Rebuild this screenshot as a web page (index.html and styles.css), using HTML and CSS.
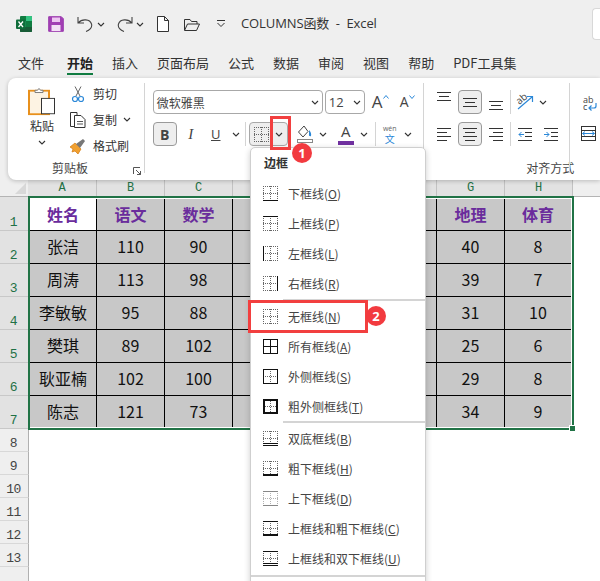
FILE: index.html
```html
<!DOCTYPE html>
<html lang="zh-CN">
<head>
<meta charset="utf-8">
<title>COLUMNS函数 - Excel</title>
<link rel="stylesheet" href="styles.css">
</head>
<body>
<svg class="defs" width="0" height="0">
  <symbol id="chev" viewBox="0 0 8 5"><path d="M1 1 4 4 7 1" fill="none" stroke="#333" stroke-width="1.100"/></symbol>
  <symbol id="dots" viewBox="0 0 15 15"><path d="M.5 0V15M7.500 0V15M14.500 0V15M0 .5H15M0 7.500H15M0 14.500H15" fill="none" stroke="#666" stroke-width="1" stroke-dasharray="1 1" shape-rendering="crispEdges"/></symbol>
  <symbol id="a-top" viewBox="0 0 14 11"><path d="M0 .5H14M2 4.500H12M0 8.500H14" stroke="#333" fill="none"/></symbol>
  <symbol id="a-mid" viewBox="0 0 14 11"><path d="M0 1.500H14M2 5.500H12M0 9.500H14" stroke="#333" fill="none"/></symbol>
  <symbol id="a-left" viewBox="0 0 14 13"><path d="M0 .5H14M0 4.500H10M0 8.500H14M0 12.500H10" stroke="#333" fill="none"/></symbol>
  <symbol id="a-center" viewBox="0 0 14 13"><path d="M0 .5H14M2 4.500H12M0 8.500H14M2 12.500H12" stroke="#333" fill="none"/></symbol>
  <symbol id="a-right" viewBox="0 0 14 13"><path d="M0 .5H14M4 4.500H14M0 8.500H14M4 12.500H14" stroke="#333" fill="none"/></symbol>
</svg>

<header class="titlebar">
  <svg class="q q-logo" width="16" height="16" viewBox="0 0 16 16"><rect x="4" y="0" width="12" height="16" rx="1" fill="#107c41"/><path d="M10 0h5a1 1 0 0 1 1 1v4h-6z" fill="#33c481"/><path d="M10 5h6v6h-6z" fill="#107c41"/><path d="M4 11h12v4a1 1 0 0 1-1 1H5a1 1 0 0 1-1-1z" fill="#185c37"/><path d="M4 5h6v6H4z" fill="#21a366"/><rect x="0" y="3.500" width="9.500" height="9.500" rx="1" fill="#0f6d3a"/><path d="M2.500 5.500 7 11M7 5.500 2.500 11" stroke="#fff" stroke-width="1.300"/></svg>
  <svg class="q q-save" width="16" height="16" viewBox="0 0 16 16"><path d="M.7.700h12.600l2 2V15.300H.7z" fill="#a23fb4" stroke="#9a3aae"/><rect x="4" y="1.500" width="8" height="4.500" fill="#edc6f1"/><rect x="3.500" y="9" width="9" height="6" fill="#f4e0f6"/></svg>
  <svg class="q q-undo" width="16" height="16" viewBox="0 0 16 16"><path d="M1 1V7H7M1.300 6.800C5 2.500 13 3 14.500 8c1 3.500-2 6.500-5.500 7.500" fill="none" stroke="#444" stroke-width="1.100"/></svg>
  <svg class="q q-c1" width="8" height="5"><use href="#chev"/></svg>
  <svg class="q q-redo" width="16" height="16" viewBox="0 0 16 16"><path d="M15 1V7H9M14.700 6.800C11 2.500 3 3 1.500 8c-1 3.500 2 6.500 5.500 7.500" fill="none" stroke="#444" stroke-width="1.100"/></svg>
  <svg class="q q-c2" width="8" height="5"><use href="#chev"/></svg>
  <svg class="q q-new" width="12" height="16" viewBox="0 0 12 16"><path d="M.5.500H7.500L11.500 4.500V15.500H.5ZM7.500.500V4.500H11.500" fill="#fff" stroke="#333"/></svg>
  <svg class="q q-open" width="16" height="13" viewBox="0 0 16 13"><path d="M.5 12V1.500H6l1.500 2H13V6M.5 12.500H12.500L15.500 6H3.500Z" fill="none" stroke="#333"/></svg>
  <svg class="q q-more" width="8" height="8" viewBox="0 0 8 8"><path d="M0 .5H8M.5 3 4 6.500 7.500 3" fill="none" stroke="#333"/></svg>
  <div class="doc-title">COLUMNS函数&nbsp; -&nbsp; Excel</div>
  <div class="search"></div>
</header>

<nav class="tabs">
  <span class="tab">文件</span>
  <span class="tab tab-on">开始</span>
  <span class="tab">插入</span>
  <span class="tab">页面布局</span>
  <span class="tab">公式</span>
  <span class="tab">数据</span>
  <span class="tab">审阅</span>
  <span class="tab">视图</span>
  <span class="tab">帮助</span>
  <span class="tab">PDF工具集</span>
</nav>

<section class="ribbon">
  <div class="group g-clip">
    <div class="clip-body">
      <div class="paste">
        <svg width="28" height="28" viewBox="0 0 28 31" preserveAspectRatio="none"><rect x="1" y="3" width="20" height="26" fill="#fdf3e3" stroke="#e8901c" stroke-width="2"/><path d="M7 5V2.500h2.500L11 .5l1.500 2H15V5Z" fill="#fff" stroke="#777"/><rect x="13.500" y="11.500" width="13" height="17" fill="#fff" stroke="#333"/></svg>
        <span class="paste-label">粘贴</span>
        <svg class="paste-chev" width="8" height="5"><use href="#chev"/></svg>
      </div>
      <div class="clip-list">
        <div class="clip-row">
          <svg width="12" height="17" viewBox="0 0 12 17"><path d="M3 .5 8 10M9 .5 4 10" stroke="#666" fill="none"/><circle cx="3" cy="13" r="2.500" fill="none" stroke="#2b88d8" stroke-width="1.200"/><circle cx="9" cy="13" r="2.500" fill="none" stroke="#2b88d8" stroke-width="1.200"/></svg>
          <span>剪切</span>
        </div>
        <div class="clip-row">
          <svg width="16" height="16" viewBox="0 0 16 16"><path d="M4.500 14.500H.5V.5H7V3" fill="none" stroke="#333"/><path d="M4.500 3.500H11L15 7.500V15.500H4.500Z" fill="#fff" stroke="#333"/><path d="M7 9.500H13M7 12H13" stroke="#555"/></svg>
          <span>复制</span>
          <svg class="clip-chev" width="8" height="5"><use href="#chev"/></svg>
        </div>
        <div class="clip-row">
          <svg width="16" height="15" viewBox="0 0 16 15"><path d="M0 8 5 4l6 6-3 5-3-3-3 1 1-3Z" fill="#f0a030" stroke="#d47a10" stroke-width=".7"/><path d="M6 5 13 0l2 2-5 7Z" fill="#777"/></svg>
          <span>格式刷</span>
        </div>
      </div>
    </div>
    <div class="group-label lab-clip">剪贴板
      <svg class="launch" width="8" height="8" viewBox="0 0 8 8"><path d="M.5 7V.5H7M3 3 7.500 7.500M7.500 4V7.500H4" fill="none" stroke="#555"/></svg>
    </div>
  </div>

  <div class="group g-font">
    <div class="tool-row">
      <div class="field f-name">微软雅黑<svg width="8" height="5"><use href="#chev"/></svg></div>
      <div class="field f-size">12<svg width="8" height="5"><use href="#chev"/></svg></div>
      <span class="grow">A<svg width="6" height="4" viewBox="0 0 6 4"><path d="M.5 3.500 3 .5l2.500 3" fill="none" stroke="#2b88d8"/></svg></span>
      <span class="shrink">A<svg width="6" height="4" viewBox="0 0 6 4"><path d="M.5.500 3 3.500 5.500.5" fill="none" stroke="#2b88d8"/></svg></span>
    </div>
    <div class="tool-row">
      <span class="btn on bold">B</span>
      <span class="btn ital">I</span>
      <span class="btn under">U</span>
      <span class="cv c-u"><svg width="8" height="5"><use href="#chev"/></svg></span>
      <span class="vline v-a"></span>
      <span class="split">
        <svg width="15" height="15"><use href="#dots"/></svg>
        <svg class="split-c" width="8" height="5"><use href="#chev"/></svg>
      </span>
      <svg class="fill-ic" width="16" height="18" viewBox="0 0 16 18"><path d="M7 1 1.500 7 6 12l5-5.500Z" fill="#fff" stroke="#444"/><path d="M12 5c2 2 2.500 4 2 6-1 .5-2.500 0-2-2Z" fill="#2b88d8"/><rect x=".5" y="14.500" width="15" height="3" fill="#fff" stroke="#888"/></svg>
      <span class="cv c-f"><svg width="8" height="5"><use href="#chev"/></svg></span>
      <span class="color-a">A<i></i></span>
      <span class="cv c-f"><svg width="8" height="5"><use href="#chev"/></svg></span>
      <span class="vline v-b"></span>
      <span class="wen"><small>wén</small><b>文</b></span>
      <span class="cv c-w"><svg width="8" height="5"><use href="#chev"/></svg></span>
    </div>
  </div>

  <div class="group g-align">
    <div class="tool-row">
      <span class="btn"><svg class="nudge-up" width="14" height="11"><use href="#a-top"/></svg></span>
      <span class="btn on"><svg width="14" height="11"><use href="#a-mid"/></svg></span>
      <span class="btn"><svg class="nudge-down" width="14" height="11"><use href="#a-top"/></svg></span>
      <span class="vline v-c"></span>
      <span class="btn">
        <svg width="22" height="22" viewBox="-2 -3 22 22"><path d="M2 15 16 3M11 2.500H16.500V8" fill="none" stroke="#2b88d8" stroke-width="1.200"/><text x="1" y="9" class="ori" transform="rotate(-40 5 7)">ab</text></svg>
      </span>
      <span class="cv c-o"><svg width="8" height="5"><use href="#chev"/></svg></span>
    </div>
    <div class="tool-row">
      <span class="btn"><svg width="14" height="13"><use href="#a-left"/></svg></span>
      <span class="btn on"><svg width="14" height="13"><use href="#a-center"/></svg></span>
      <span class="btn"><svg width="14" height="13"><use href="#a-right"/></svg></span>
      <span class="vline v-c"></span>
      <span class="btn"><svg width="14" height="13" viewBox="0 0 14 13"><path d="M0 .5H14M7 4.500H14M7 8.500H14M0 12.500H14" stroke="#333" fill="none"/><path d="M1 6.500H6M3.500 4 1 6.500 3.500 9" stroke="#2b88d8" fill="none"/></svg></span>
      <span class="btn b-last"><svg width="14" height="13" viewBox="0 0 14 13"><path d="M0 .5H14M7 4.500H14M7 8.500H14M0 12.500H14" stroke="#333" fill="none"/><path d="M0 6.500H5M2.500 4 5 6.500 2.500 9" stroke="#2b88d8" fill="none"/></svg></span>
    </div>
    <div class="group-label lab-align">对齐方式</div>
  </div>

  <div class="group g-last">
    <svg class="wrap-ic" width="18" height="19" viewBox="0 0 18 19"><text x="1" y="8" class="wrap-t">ab</text><text x="1" y="15" class="wrap-t">c</text><path d="M14 8v3a2 2 0 0 1-2 2H7M9.500 10.500 7 13l2.500 2.500" fill="none" stroke="#2b88d8" stroke-width="1.200"/></svg>
    <svg class="merge-ic" width="15" height="15" viewBox="0 0 15 15"><rect x=".5" y=".5" width="14" height="14" fill="#fff" stroke="#333"/><path d="M0 4.500H15M0 10.500H15" stroke="#333"/><rect x="1" y="5" width="13" height="5" fill="#fff"/><path d="M1.500 7.500H13.500M4 5.500 1.500 7.500 4 9.500M11 5.500 13.500 7.500 11 9.500" fill="none" stroke="#2b88d8"/></svg>
  </div>
</section>

<section class="sheet">
  <div class="colhead">
    <div class="corner"><i></i></div>
    <div class="col col-a">A</div>
    <div class="col">B</div>
    <div class="col">C</div>
    <div class="col"></div>
    <div class="col"></div>
    <div class="col"></div>
    <div class="col">G</div>
    <div class="col">H</div>
  </div>
  <div class="sheet-body">
    <div class="rownums">
      <div class="rn sel r-first">1</div>
      <div class="rn sel">2</div>
      <div class="rn sel">3</div>
      <div class="rn sel">4</div>
      <div class="rn sel">5</div>
      <div class="rn sel">6</div>
      <div class="rn sel">7</div>
      <div class="rn plain">8</div>
      <div class="rn plain">9</div>
      <div class="rn plain">10</div>
      <div class="rn plain">11</div>
      <div class="rn plain">12</div>
      <div class="rn plain">13</div>
      <div class="rn plain"></div>
    </div>
    <div class="selection">
      <div class="grid">
        <div class="c h a1">姓名</div><div class="c h">语文</div><div class="c h">数学</div><div class="c"></div><div class="c"></div><div class="c"></div><div class="c h">地理</div><div class="c h">体育</div>
        <div class="c">张洁</div><div class="c">110</div><div class="c">90</div><div class="c"></div><div class="c"></div><div class="c"></div><div class="c">40</div><div class="c">8</div>
        <div class="c">周涛</div><div class="c">113</div><div class="c">98</div><div class="c"></div><div class="c"></div><div class="c"></div><div class="c">39</div><div class="c">7</div>
        <div class="c">李敏敏</div><div class="c">95</div><div class="c">88</div><div class="c"></div><div class="c"></div><div class="c"></div><div class="c">31</div><div class="c">10</div>
        <div class="c">樊琪</div><div class="c">89</div><div class="c">102</div><div class="c"></div><div class="c"></div><div class="c"></div><div class="c">25</div><div class="c">6</div>
        <div class="c">耿亚楠</div><div class="c">102</div><div class="c">100</div><div class="c"></div><div class="c"></div><div class="c"></div><div class="c">29</div><div class="c">8</div>
        <div class="c">陈志</div><div class="c">121</div><div class="c">73</div><div class="c"></div><div class="c"></div><div class="c"></div><div class="c">34</div><div class="c">9</div>
      </div>
      <i class="handle"></i>
    </div>
  </div>
</section>

<aside class="menu">
  <div class="menu-title">边框</div>
  <div class="item"><svg width="15" height="15" viewBox="0 0 15 15"><use href="#dots"/><path class="ln" d="M0 14.500H15"/></svg><span>下框线(<u>O</u>)</span></div>
  <div class="item"><svg width="15" height="15" viewBox="0 0 15 15"><use href="#dots"/><path class="ln" d="M0 .5H15"/></svg><span>上框线(<u>P</u>)</span></div>
  <div class="item"><svg width="15" height="15" viewBox="0 0 15 15"><use href="#dots"/><path class="ln" d="M.5 0V15"/></svg><span>左框线(<u>L</u>)</span></div>
  <div class="item"><svg width="15" height="15" viewBox="0 0 15 15"><use href="#dots"/><path class="ln" d="M14.500 0V15"/></svg><span>右框线(<u>R</u>)</span></div>
  <div class="sep s1"></div>
  <div class="item"><svg width="15" height="15" viewBox="0 0 15 15"><use href="#dots"/></svg><span>无框线(<u>N</u>)</span></div>
  <div class="item"><svg width="15" height="15" viewBox="0 0 15 15"><path class="ln" d="M.5.500H14.500V14.500H.5ZM7.500 0V15M0 7.500H15"/></svg><span>所有框线(<u>A</u>)</span></div>
  <div class="item"><svg width="15" height="15" viewBox="0 0 15 15"><use href="#dots"/><path class="ln" d="M.5.500H14.500V14.500H.5Z"/></svg><span>外侧框线(<u>S</u>)</span></div>
  <div class="item"><svg width="15" height="15" viewBox="0 0 15 15"><use href="#dots"/><path class="ln thick" d="M1 1H14V14H1Z"/></svg><span>粗外侧框线(<u>T</u>)</span></div>
  <div class="sep s2"></div>
  <div class="item"><svg width="15" height="15" viewBox="0 0 15 15"><use href="#dots"/><path class="ln" d="M0 12.500H15M0 14.500H15"/></svg><span>双底框线(<u>B</u>)</span></div>
  <div class="item"><svg width="15" height="15" viewBox="0 0 15 15"><use href="#dots"/><path class="ln thick" d="M0 14H15"/></svg><span>粗下框线(<u>H</u>)</span></div>
  <div class="item"><svg class="faint" width="15" height="15" viewBox="0 0 15 15"><use href="#dots"/><path class="ln" d="M0 .5H15M0 14.500H15"/></svg><span>上下框线(<u>D</u>)</span></div>
  <div class="item"><svg width="15" height="15" viewBox="0 0 15 15"><use href="#dots"/><path class="ln" d="M0 .5H15"/><path class="ln thick" d="M0 14H15"/></svg><span>上框线和粗下框线(<u>C</u>)</span></div>
  <div class="item"><svg width="15" height="15" viewBox="0 0 15 15"><use href="#dots"/><path class="ln" d="M0 .5H15M0 12.500H15M0 14.500H15"/></svg><span>上框线和双下框线(<u>U</u>)</span></div>
  <div class="sep s3"></div>
</aside>

<div class="mark mark-1"></div>
<div class="mark mark-2"></div>
<div class="badge badge-1">1</div>
<div class="badge badge-2">2</div>
</body>
</html>
```
FILE: styles.css
```css
* { box-sizing: border-box; }
html, body { margin: 0; height: 581px; overflow: hidden; }
body {
  position: relative;
  width: 600px;
  background: #efefef;
  color: #333;
  font-family: "Open Sans", "Noto Sans CJK SC", sans-serif;
  font-size: 12px;
}
.defs { position: absolute; }
svg { display: block; flex: none; }

/* title bar */
.titlebar { height: 50px; display: flex; align-items: center; padding: 0 0 2px 16px; overflow: hidden; }
.q-save { margin-left: 16px; }
.q-undo { margin-left: 13px; }
.q-c1 { margin-left: 4px; }
.q-redo { margin-left: 12px; }
.q-c2 { margin-left: 3px; }
.q-new { margin-left: 13px; }
.q-open { margin-left: 15px; }
.q-more { margin-left: 17px; }
.doc-title { margin: -4px 0 0 16px; flex: 1; font-size: 13px; letter-spacing: -.1px; color: #333; white-space: nowrap; }
.search { width: 8px; height: 32px; margin-top: 0; background: #fff; border: 1px solid #d8d8d8; border-right: 0; border-radius: 4px 0 0 4px; }

/* tabs */
.tabs { height: 28px; display: flex; gap: 19px; padding: 0 0 2px 18px; align-items: center; }
.tab { font-size: 13px; line-height: 22px; font-family: "Noto Sans CJK SC", sans-serif; color: #333; position: relative; }
.tab-on { font-weight: 700; color: #222; margin-left: 4px; }
.tab-on::after { content: ""; position: absolute; left: 0; right: 0; bottom: -1px; height: 2px; background: #107c41; }

/* ribbon */
.ribbon {
  height: 102px;
  margin-left: 8px;
  display: flex;
  background: #fff;
  border-radius: 8px 0 0 8px;
  box-shadow: 0 1px 4px rgba(0, 0, 0, .22);
  position: relative;
  z-index: 2;
}
.group { position: relative; padding-top: 12px; display: flex; flex-direction: column; gap: 8px; }
.group::after { content: ""; position: absolute; right: 0; top: 5px; bottom: 7px; width: 1px; background: #d4d4d4; }
.group-label { position: absolute; left: 0; right: 0; top: 82px; text-align: center; font-size: 12px; line-height: 18px; color: #444; }
.g-clip { width: 137px; padding: 10px 0 0 14px; }
.clip-body { display: flex; gap: 8px; }
.paste { width: 40px; display: flex; flex-direction: column; align-items: center; }
.paste-label { margin-top: 2px; line-height: 18px; font-size: 12px; }
.paste-chev { margin-top: 4px; }
.clip-list { display: flex; flex-direction: column; gap: 6px; margin-top: -4px; }
.clip-row { display: flex; align-items: center; height: 20px; width: 68px; gap: 7px; position: relative; font-size: 12px; }
.clip-row svg { width: 16px; }
.clip-row svg.clip-chev { width: 8px; position: absolute; left: 53px; top: 7px; }
.lab-clip { text-align: left; padding-left: 44px; }
.launch { position: absolute; left: 125px; top: 7px; }

.g-font { width: 280px; padding-left: 8px; }
.g-align { width: 146px; padding-left: 8px; }
.g-last { flex: 1; padding-left: 12px; gap: 0; }
.g-last::after { display: none; }
.tool-row { display: flex; align-items: center; height: 24px; }
.g-align .tool-row { gap: 2px; }

.field { height: 24px; display: flex; align-items: center; justify-content: space-between; border: 1px solid #a8a8a8; border-radius: 4px; padding: 0 3px; color: #444; font-size: 12px; background: #fff; }
.f-name { width: 170px; font-family: "Noto Sans CJK SC", sans-serif; }
.f-size { width: 40px; margin-left: 2px; font-size: 13px; }
.grow, .shrink { display: flex; align-items: flex-start; color: #444; line-height: 24px; }
.grow { font-size: 17px; margin-left: 7px; width: 28px; }
.shrink { font-size: 14px; width: 16px; }
.grow svg, .shrink svg { margin-top: 5px; }

.btn { width: 24px; height: 24px; flex: none; display: flex; align-items: center; justify-content: center; border-radius: 4px; border: 1px solid transparent; color: #444; font-size: 14px; }
.btn.on { background: #eee; border-color: #9a9a9a; }
.bold { font-weight: 700; font-size: 14px; }
.ital { font-style: italic; margin-left: 2px; font-family: "Liberation Serif", serif; font-size: 15px; }
.under { text-decoration: underline; margin-left: 1px; font-size: 13px; }
.cv { display: flex; justify-content: center; align-items: center; height: 24px; flex: none; }
.c-u { width: 16px; }
.c-f { width: 20px; }
.c-w { width: 22px; }
.c-o { width: 8px; }
.vline { width: 1px; height: 24px; background: #d4d4d4; flex: none; }
.v-a { margin: 0 3px 0 1px; }
.v-b { margin: 0 7px 0 1px; }
.split { width: 39px; height: 24px; flex: none; display: flex; align-items: center; padding-left: 4px; border: 1px solid #a8a8a8; border-radius: 4px; background: #eee; }
.split-c { margin-left: 6px; }
.fill-ic { margin-left: 9px; }
.color-a { width: 16px; margin-left: 5px; height: 24px; display: flex; flex-direction: column; align-items: center; font-size: 15px; line-height: 19px; color: #444; flex: none; }
.color-a i { width: 16px; height: 4px; background: #7030a0; }
.wen { width: 14px; display: flex; flex-direction: column; align-items: center; flex: none; }
.wen small { font-size: 7px; line-height: 9px; color: #666; }
.wen b { font-size: 10px; line-height: 11px; font-weight: 400; color: #2b88d8; font-family: "Noto Sans CJK SC", sans-serif; }
.nudge-up { margin-top: -9px; }
.nudge-down { margin-top: 8px; }
.ori { font-size: 10px; fill: #444; }
.lab-align { left: 102px; right: auto; white-space: nowrap; }
.wrap-ic { margin-top: 5px; }
.wrap-t { font-size: 9px; fill: #444; }
.merge-ic { margin-top: 12px; margin-left: -1px; }

/* sheet */
.sheet { position: absolute; left: 0; right: 0; top: 180px; bottom: 0; background: #fff; overflow: hidden; }
.colhead { height: 17px; display: flex; background: #efefef; border-bottom: 1px solid #b4b4b4; }
.corner { width: 28px; position: relative; flex: none; }
.corner i { position: absolute; left: 15px; top: 3px; width: 11px; height: 11px; background: #d8d8d8; clip-path: polygon(100% 0, 100% 100%, 0 100%); }
.col { width: 68px; flex: none; background: #e2e2e2; border-right: 1px solid #c2c2c2; text-align: center; color: #1e7145; font-family: "Liberation Mono", monospace; font-size: 12px; line-height: 17px; }
.col-a { width: 69px; }
.sheet-body { display: flex; align-items: flex-start; }
.rownums { width: 29px; flex: none; }
.rn { height: 33px; display: flex; align-items: flex-end; justify-content: center; font-family: "Liberation Mono", monospace; font-size: 13px; letter-spacing: -.5px; line-height: 15px; padding-right: 1px; }
.r-first { height: 34px; }
.sel { background: #e2e2e2; border-bottom: 1px solid #c8c8c8; color: #1e7145; width: 28px; }
.plain { height: 23px; background: #efefef; border-bottom: 1px solid #d8d8d8; border-right: 1px solid #b0b0b0; color: #444; }
.selection { margin: -1px 0 0 -1px; width: 546px; border: 2px solid #217346; padding: 1px 1px 1px 0; background: #fff; position: relative; }
.grid { display: grid; grid-template-columns: 67px repeat(6, 68px) 66px; grid-template-rows: 32px repeat(5, 33px) 31px; }
.c { background: #c8c8c8; display: flex; align-items: center; justify-content: center; padding-bottom: 2px; border-right: 1px solid #000; border-bottom: 1px solid #000; font-family: "Noto Sans CJK SC", sans-serif; font-size: 16px; color: #111; line-height: 1; }
.c:nth-child(8n) { border-right: 0; }
.c:nth-last-child(-n+8) { border-bottom: 0; }
.h { font-weight: 700; color: #6a2c9c; }
.a1 { background: #fff; }
.handle { position: absolute; right: -4px; bottom: -4px; width: 7px; height: 7px; background: #217346; border: 1px solid #fff; }

/* menu */
.menu { position: absolute; left: 250px; top: 147px; width: 176px; height: 440px; background: #fff; border: 1px solid #cfcfcf; border-radius: 5px 5px 0 0; box-shadow: 0 2px 6px rgba(0, 0, 0, .2); z-index: 3; }
.menu-title { height: 30px; padding-left: 13px; font-weight: 700; font-size: 12px; line-height: 30px; color: #333; font-family: "Noto Sans CJK SC", sans-serif; }
.item { height: 30px; display: flex; align-items: center; padding-left: 12px; gap: 10px; font-size: 12px; color: #444; font-family: "Noto Sans CJK SC", sans-serif; }
.item u { text-underline-offset: 1px; }
.ln { stroke: #111; stroke-width: 1; fill: none; shape-rendering: crispEdges; }
.thick { stroke-width: 2; }
.faint { opacity: .5; }
.sep { background: #d4d4d4; height: 2px; }
.s1 { margin: 1px 0 0 32px; }
.s2 { margin-left: 32px; }
.s3 { margin-top: 2px; }

/* annotations */
.mark { position: absolute; border: 3px solid #f23f3f; z-index: 4; }
.mark-1 { left: 270px; top: 116px; width: 21px; height: 34px; }
.mark-2 { left: 248px; top: 300px; width: 120px; height: 33px; }
.badge { position: absolute; width: 20px; height: 20px; border-radius: 50%; background: #f23a3f; color: #fff; font-weight: 700; font-size: 13px; line-height: 20px; text-align: center; z-index: 5; }
.badge-1 { left: 292px; top: 143px; }
.badge-2 { left: 366px; top: 306px; }
```
